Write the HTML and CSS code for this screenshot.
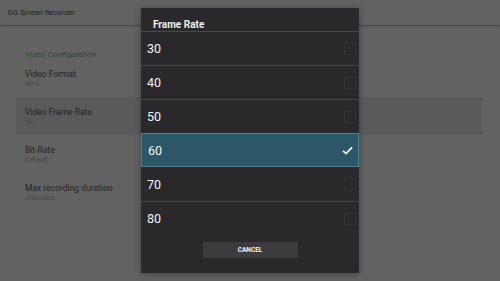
FILE: index.html
```html
<!DOCTYPE html>
<html lang="en">
<head>
    <meta charset="UTF-8">
    <meta name="viewport" content="width=device-width, initial-scale=1.0">
    <title>DG Screen Recorder</title>
    <link rel="stylesheet" href="styles.css">
</head>
<body>
    <header class="appbar">DG Screen Recorder</header>
    <main class="settings">
        <h2 class="group-title">Video Configuration</h2>
        <div class="item">
            <div class="item-title">Video Format</div>
            <div class="item-sub">MP4</div>
        </div>
        <div class="item focused">
            <div class="item-title">Video Frame Rate</div>
            <div class="item-sub">60</div>
        </div>
        <div class="item">
            <div class="item-title">Bit-Rate</div>
            <div class="item-sub">Default</div>
        </div>
        <div class="item">
            <div class="item-title">Max recording duration</div>
            <div class="item-sub">Unlimited</div>
        </div>
    </main>

    <!-- dialog de selección -->
    <div class="dialog">
        <div class="dialog-title">Frame Rate</div>
        <ul class="options">
            <li class="option"><span>30</span><i class="box"></i></li>
            <li class="option"><span>40</span><i class="box"></i></li>
            <li class="option"><span>50</span><i class="box"></i></li>
            <li class="option selected"><span>60</span>
                <svg class="check" width="11" height="9" viewBox="0 0 11 9"><path d="M1 4.8 L4 7.6 L10 1.4" fill="none" stroke="#fff" stroke-width="1.8"/></svg>
            </li>
            <li class="option"><span>70</span><i class="box"></i></li>
            <li class="option"><span>80</span><i class="box"></i></li>
        </ul>
        <div class="actions">
            <button class="cancel">CANCEL</button>
        </div>
    </div>
</body>
</html>
```

FILE: styles.css
```css
* {
    box-sizing: border-box;
    margin: 0;
    padding: 0;
}

body {
    font-family: Roboto, "Liberation Sans", sans-serif;
    background-color: #626262;
    color: #222;
    width: 500px;
    height: 281px;
    overflow: hidden;
}

.appbar {
    height: 26px;
    line-height: 25px;
    padding-left: 8px;
    font-size: 7.5px;
    color: #1f1f1f;
    border-bottom: 1px solid #474747;
    box-shadow: 0 1px 2px rgba(0, 0, 0, 0.1);
}

.settings {
    padding-top: 24px;
}

.group-title {
    font-size: 8px;
    font-weight: 500;
    line-height: 9px;
    color: #33503e;
    padding-left: 25px;
}

.item {
    height: 38px;
    margin: 0 18px 0 16px;
    padding: 9px 0 0 9px;
}

.item.focused {
    background-color: #5a5a5a;
}

.item-title {
    font-size: 8.5px;
    line-height: 12px;
    color: #252525;
}

.item-sub {
    font-size: 7px;
    line-height: 8px;
    color: #474747;
}

.dialog {
    position: absolute;
    left: 141px;
    top: 8px;
    width: 218px;
    height: 265px;
    background-color: #29292b;
    box-shadow: 0 1px 6px rgba(0, 0, 0, 0.35);
}

.dialog-title {
    height: 24px;
    padding: 11px 0 0 12px;
    font-size: 10px;
    line-height: 12px;
    font-weight: bold;
    color: #f0f0f0;
    border-bottom: 1px solid #4a4a4a;
}

.options {
    list-style: none;
}

.option {
    height: 34px;
    display: flex;
    align-items: center;
    justify-content: space-between;
    padding: 0 3px 0 6px;
    border-top: 1px solid #474747;
    font-size: 12.5px;
    color: #f4f4f4;
}

.option:first-child {
    border-top: none;
    height: 33px;
}

.option.selected {
    background-color: #2b5769;
    border: 1px solid #4e8092;
    height: 34px;
    padding-right: 5px;
}

.option.selected + .option {
    border-top: none;
}

.box {
    width: 12px;
    height: 12px;
    border: 1px solid #333335;
}

.actions {
    display: flex;
    justify-content: center;
    padding-top: 7px;
}

.cancel {
    width: 95px;
    height: 16px;
    background-color: #3c3c3e;
    color: #f2f2f2;
    border: none;
    font-family: Roboto, "Liberation Sans", sans-serif;
    font-size: 6.5px;
    font-weight: bold;
}
```
